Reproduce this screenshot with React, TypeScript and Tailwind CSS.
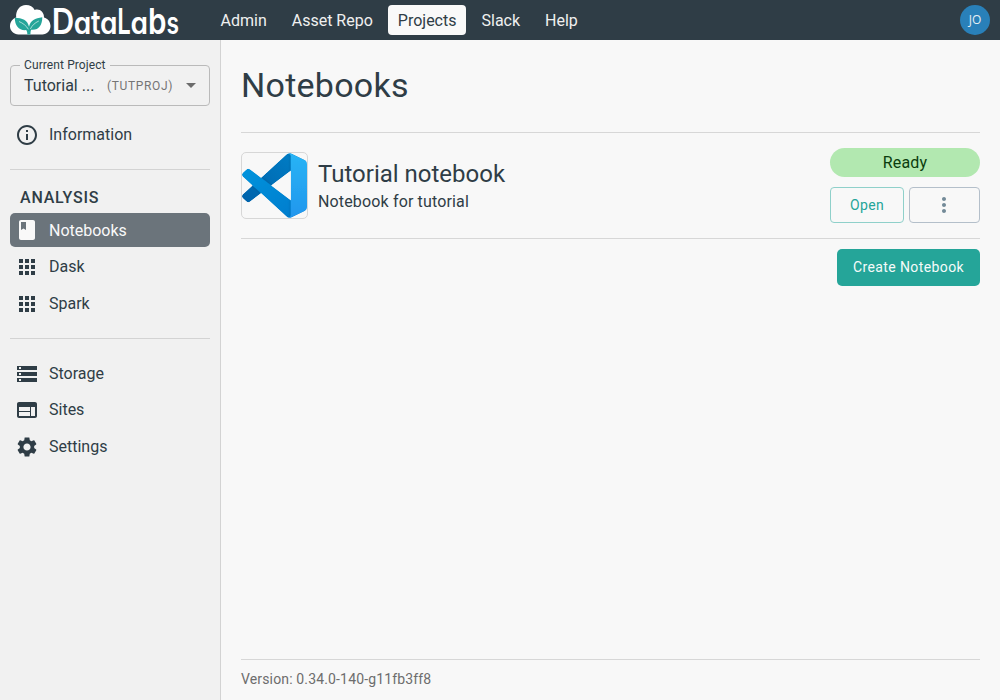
import React from "react";

const ICONS = {
  info: "M11 7h2v2h-2zm0 4h2v6h-2zm1-9C6.48 2 2 6.48 2 12s4.48 10 10 10 10-4.48 10-10S17.52 2 12 2zm0 18c-4.41 0-8-3.59-8-8s3.59-8 8-8 8 3.59 8 8-3.59 8-8 8z",
  book: "M18 2H6c-1.1 0-2 .9-2 2v16c0 1.1.9 2 2 2h12c1.1 0 2-.9 2-2V4c0-1.1-.9-2-2-2zM6 4h5v8l-2.5-1.5L6 12V4z",
  apps: "M4 8h4V4H4v4zm6 12h4v-4h-4v4zm-6 0h4v-4H4v4zm0-6h4v-4H4v4zm6 0h4v-4h-4v4zm6-10v4h4V4h-4zm-6 4h4V4h-4v4zm6 6h4v-4h-4v4zm0 6h4v-4h-4v4z",
  storage: "M2 20h20v-4H2v4zm2-3h2v2H4v-2zM2 4v4h20V4H2zm4 3H4V5h2v2zm-4 7h20v-4H2v4zm2-3h2v2H4v-2z",
  web: "M20 4H4c-1.1 0-1.99.9-1.99 2L2 18c0 1.1.9 2 2 2h16c1.1 0 2-.9 2-2V6c0-1.1-.9-2-2-2zm-5 14H4v-4h11v4zm0-5H4V9h11v4zm5 5h-4V9h4v9z",
  settings: "M19.14 12.94c.04-.3.06-.61.06-.94 0-.32-.02-.64-.07-.94l2.03-1.58c.18-.14.23-.41.12-.61l-1.92-3.32c-.12-.22-.37-.29-.59-.22l-2.39.96c-.5-.38-1.03-.7-1.62-.94l-.36-2.54c-.04-.24-.24-.41-.48-.41h-3.84c-.24 0-.43.17-.47.41l-.36 2.54c-.59.24-1.13.57-1.62.94l-2.39-.96c-.22-.08-.47 0-.59.22L2.74 8.87c-.12.21-.08.47.12.61l2.03 1.58c-.05.3-.09.63-.09.94s.02.64.07.94l-2.03 1.58c-.18.14-.23.41-.12.61l1.92 3.32c.12.22.37.29.59.22l2.39-.96c.5.38 1.03.7 1.62.94l.36 2.54c.05.24.24.41.48.41h3.84c.24 0 .44-.17.47-.41l.36-2.54c.59-.24 1.13-.56 1.62-.94l2.39.96c.22.08.47 0 .59-.22l1.92-3.32c.12-.22.07-.47-.12-.61l-2.01-1.58zM12 15.6c-1.98 0-3.6-1.62-3.6-3.6s1.62-3.6 3.6-3.6 3.6 1.62 3.6 3.6-1.62 3.6-3.6 3.6z",
  more: "M12 8c1.1 0 2-.9 2-2s-.9-2-2-2-2 .9-2 2 .9 2 2 2zm0 2c-1.1 0-2 .9-2 2s.9 2 2 2 2-.9 2-2-.9-2-2-2zm0 6c-1.1 0-2 .9-2 2s.9 2 2 2 2-.9 2-2-.9-2-2-2z",
  drop: "M7 10l5 5 5-5z",
};

function Icon({ name, className = "" }: { name: keyof typeof ICONS; className?: string }) {
  return (
    <svg viewBox="0 0 24 24" className={`size-6 shrink-0 fill-current ${className}`}>
      <path d={ICONS[name]} />
    </svg>
  );
}

function Logo() {
  return (
    <div className="flex h-10 w-[200px] shrink-0 items-center pl-2.5">
      <svg viewBox="0 0 180 40" className="h-10 w-[180px] overflow-visible">
        <path
          fill="#fff"
          d="M8.500 34.500C3.800 34.500 0 30.900 0 26.300c0-4.200 2.400-7.600 6.200-8.700C5.400 10.500 9.800 5 16 5c4 0 7 1.900 8.700 4.900 4.800-1.800 9.500 2 9.300 7.500 3.900.9 6.500 4.400 6.500 8.700 0 4.800-3.600 8.400-8.200 8.400z"
        />
        <path
          fill="#25a599"
          d="M4.800 17.700c7.500.2 12.900 2.300 14.200 9.100 1.200-6.300 6.200-8.700 13.300-9.600 0 7.800-3.600 13.300-11.100 12.500-.7 1.400-.8 2.900-.7 4.800h-3.200c.1-1.900-.3-3.300-1.100-4.400C8.800 30.700 4.900 25.700 4.800 17.700z"
        />
        <path
          fill="none"
          stroke="#fff"
          strokeWidth="0.6"
          d="M9 21.500c4 1.700 7.300 4.200 9.400 7.800M28.800 21c-4 1.900-6.700 4.400-8.400 7.900"
        />
        <text
          y="34.300"
          className="fill-white font-['Inter',sans-serif] text-[30px] font-semibold [font-feature-settings:'cv11']"
        >
          <tspan x="41.700" textLength="22.500" lengthAdjust="spacingAndGlyphs" className="text-[36px]">D</tspan>
          <tspan x="63.800" textLength="17.500" lengthAdjust="spacingAndGlyphs">a</tspan>
          <tspan x="81" textLength="9.500" lengthAdjust="spacingAndGlyphs" className="text-[33px]">t</tspan>
          <tspan x="90" textLength="17.500" lengthAdjust="spacingAndGlyphs">a</tspan>
          <tspan x="107.200" textLength="13.500" lengthAdjust="spacingAndGlyphs" className="text-[36px]">L</tspan>
          <tspan x="120.500" textLength="17.500" lengthAdjust="spacingAndGlyphs">a</tspan>
          <tspan x="138" textLength="18.500" lengthAdjust="spacingAndGlyphs" className="text-[36px]">b</tspan>
          <tspan x="156.500" textLength="12.500" lengthAdjust="spacingAndGlyphs">s</tspan>
        </text>
      </svg>
    </div>
  );
}

function NavItem({ label, active = false }: { label: string; active?: boolean }) {
  return (
    <a className={`flex h-[30px] items-center rounded px-2.5 pt-px ${active ? "bg-[#f9f9f9] text-[#2f3d46]" : "text-[#f0f0f0]"}`}>
      {label}
    </a>
  );
}

function SideItem({ icon, label, active = false }: { icon: keyof typeof ICONS; label: string; active?: boolean }) {
  return (
    <a className={`flex h-[34px] items-center gap-2.5 rounded-[5px] pl-[5px] ${active ? "bg-[#6b747b] text-[#f9f9f9]" : ""}`}>
      <Icon name={icon} />
      <span className={active ? "pt-px" : ""}>{label}</span>
    </a>
  );
}

function VsCodeLogo() {
  return (
    <svg viewBox="0 0 100 100" className="size-[65px]">
      <defs>
        <linearGradient id="upper" x1="0" y1="1" x2="1" y2="0">
          <stop offset="0" stopColor="#0062aa" />
          <stop offset="1" stopColor="#0080c8" />
        </linearGradient>
        <linearGradient id="lower" x1="0" y1="0" x2="1" y2="1">
          <stop offset="0" stopColor="#0093dc" />
          <stop offset="1" stopColor="#007acc" />
        </linearGradient>
        <linearGradient id="side" x1="0" y1="0" x2="0" y2="1">
          <stop offset="0" stopColor="#29b4f5" />
          <stop offset="1" stopColor="#2196ed" />
        </linearGradient>
        <filter id="shade" x="-20%" y="-20%" width="140%" height="140%">
          <feDropShadow dx="0" dy="0" stdDeviation="2.500" floodOpacity="0.2" />
        </filter>
        <clipPath id="outline">
          <path
            clipRule="evenodd"
            d="M70.900 99.300c1.600.6 3.400.6 5-.2l20.600-9.900c2.200-1 3.500-3.200 3.500-5.600V16.400c0-2.400-1.400-4.600-3.500-5.600L75.900.9c-2.100-1-4.500-.8-6.400.6-.3.200-.5.400-.8.600L29.400 38 12.200 25c-1.600-1.200-3.800-1.100-5.300.2l-5.500 5c-1.800 1.700-1.800 4.500 0 6.200L16.200 50 1.400 63.600c-1.800 1.700-1.800 4.500 0 6.200l5.500 5c1.500 1.300 3.700 1.400 5.300.2l17.200-13 39.400 36c.6.600 1.300 1.100 2.100 1.300zM75 27.300 45.100 50 75 72.700z"
          />
        </clipPath>
      </defs>
      <g clipPath="url(#outline)">
        <path fill="url(#upper)" d="M96.4614 10.7962L75.8569 .8755C73.4719-.2728 70.6217.2116 68.75 2.0833L1.2986 63.5832C-.5157 65.2373-.5136 68.0937 1.3031 69.7452L6.8127 74.754C8.2979 76.1042 10.5347 76.2036 12.1338 74.9905L93.3609 13.3699C96.086 11.3026 100 13.2462 100 16.6667V16.4275C100 14.0265 98.6246 11.8378 96.4614 10.7962Z" />
        <path filter="url(#shade)" fill="url(#lower)" d="M96.4614 89.2038L75.8569 99.1245C73.4719 100.273 70.6217 99.7884 68.75 97.9167L1.2986 36.4169C-.5157 34.7627-.5136 31.9063 1.3031 30.2548L6.8127 25.246C8.2979 23.8958 10.5347 23.7964 12.1338 25.0095L93.3609 86.6301C96.086 88.6974 100 86.7538 100 83.3333V83.5726C100 85.9735 98.6246 88.1622 96.4614 89.2038Z" />
        <path filter="url(#shade)" fill="url(#side)" d="M75.8578 99.1263C73.4721 100.274 70.6219 99.7885 68.75 97.9166C71.0564 100.223 75 98.5895 75 95.3278V4.6721C75 1.4104 71.0564-.2231 68.75 2.0833C70.6219.2114 73.4721-.2737 75.8578.8736L96.4587 10.7807C98.6234 11.8217 100 14.0112 100 16.4132V83.5871C100 85.9891 98.6234 88.1786 96.4586 89.2196L75.8578 99.1263Z" />
      </g>
    </svg>
  );
}

export default function App() {
  return (
    <div className="flex h-[700px] w-[1000px] flex-col overflow-hidden bg-[#f8f8f8] font-['Roboto',sans-serif] text-base text-[#2f3d46]">
      <header className="flex h-10 shrink-0 items-center bg-[#2f3d46] pr-2.5">
        <Logo />
        <nav className="flex grow gap-[5px] pl-[10.5px]">
          <NavItem label="Admin" />
          <NavItem label="Asset Repo" />
          <NavItem label="Projects" active />
          <NavItem label="Slack" />
          <NavItem label="Help" />
        </nav>
        <div className="flex size-[30px] items-center justify-center rounded-full bg-[#2980b9] font-['Open_Sans',sans-serif] text-xs text-[#e6eef4]">
          JO
        </div>
      </header>

      <div className="flex min-h-0 grow">
        <aside className="flex w-[221px] shrink-0 flex-col border-r border-[#d3d3d3] bg-[#f1f1f1] px-2.5">
          <fieldset className="mt-[17px] h-[49px] rounded border border-[#bababa] pl-[9px]">
            <legend className="h-4 px-1 text-xs leading-4 tracking-[0.1px]">Current Project</legend>
            <div className="flex h-6 items-center pl-1">
              <span className="w-[83px] pt-0.5">Tutorial ...</span>
              <span className="w-[72px] pt-0.5 text-xs tracking-[0.65px] text-[#757575]">(TUTPROJ)</span>
              <Icon name="drop" className="text-[#6c6c6c]" />
            </div>
          </fieldset>

          <div className="mt-3">
            <SideItem icon="info" label="Information" />
          </div>
          <hr className="mt-[17px] border-[#d3d3d3]" />
          <h2 className="mt-4 h-[27px] pl-2.5 leading-6 font-medium tracking-[0.8px]">ANALYSIS</h2>
          <div className="flex flex-col gap-[2.5px]">
            <SideItem icon="book" label="Notebooks" active />
            <SideItem icon="apps" label="Dask" />
            <div className="pt-[0.5px]">
              <SideItem icon="apps" label="Spark" />
            </div>
          </div>
          <hr className="mt-[17.500px] border-[#d3d3d3]" />
          <div className="mt-[17.500px] flex flex-col gap-[2.5px]">
            <SideItem icon="storage" label="Storage" />
            <SideItem icon="web" label="Sites" />
            <SideItem icon="settings" label="Settings" />
          </div>
        </aside>

        <main className="flex grow flex-col px-5">
          <h1 className="h-[92px] pt-5 text-[34px] leading-[51px] tracking-[0.25px]">Notebooks</h1>
          <section className="flex h-[107px] items-center border-y border-[#d7d7d7]">
            <div className="size-[67px] shrink-0 overflow-hidden rounded-[5px] border border-[#d7d7d7]">
              <VsCodeLogo />
            </div>
            <div className="grow pl-2.5">
              <h3 className="text-2xl leading-8">Tutorial notebook</h3>
              <p className="leading-6 tracking-[0.15px]">Notebook for tutorial</p>
            </div>
            <div className="flex w-[150px] flex-col gap-2.5">
              <div className="flex h-[29px] items-center justify-center rounded-full bg-[#b2e8b0] tracking-[0.15px] text-[#0b3d0e]">
                Ready
              </div>
              <div className="flex gap-[5px]">
                <button className="h-9 w-[74px] rounded border border-[#8fd0ca] text-sm tracking-[0.4px] text-[#25a599]">
                  Open
                </button>
                <button className="flex h-9 w-[71px] items-center justify-center rounded border border-[#b4bfca] pr-px text-[#738a98]">
                  <Icon name="more" />
                </button>
              </div>
            </div>
          </section>
          <button className="mt-2.5 h-[37px] w-[143px] self-end rounded-[5px] bg-[#25a599] pb-px text-sm tracking-[0.4px] text-[#f5fbfa]">
            Create Notebook
          </button>
          <footer className="mt-auto h-[41px] border-t border-[#d7d7d7] pt-[9px] text-sm leading-5 tracking-[0.15px] text-[#6d6d6d]">
            Version: 0.34.0-140-g11fb3ff8
          </footer>
        </main>
      </div>
    </div>
  );
}
